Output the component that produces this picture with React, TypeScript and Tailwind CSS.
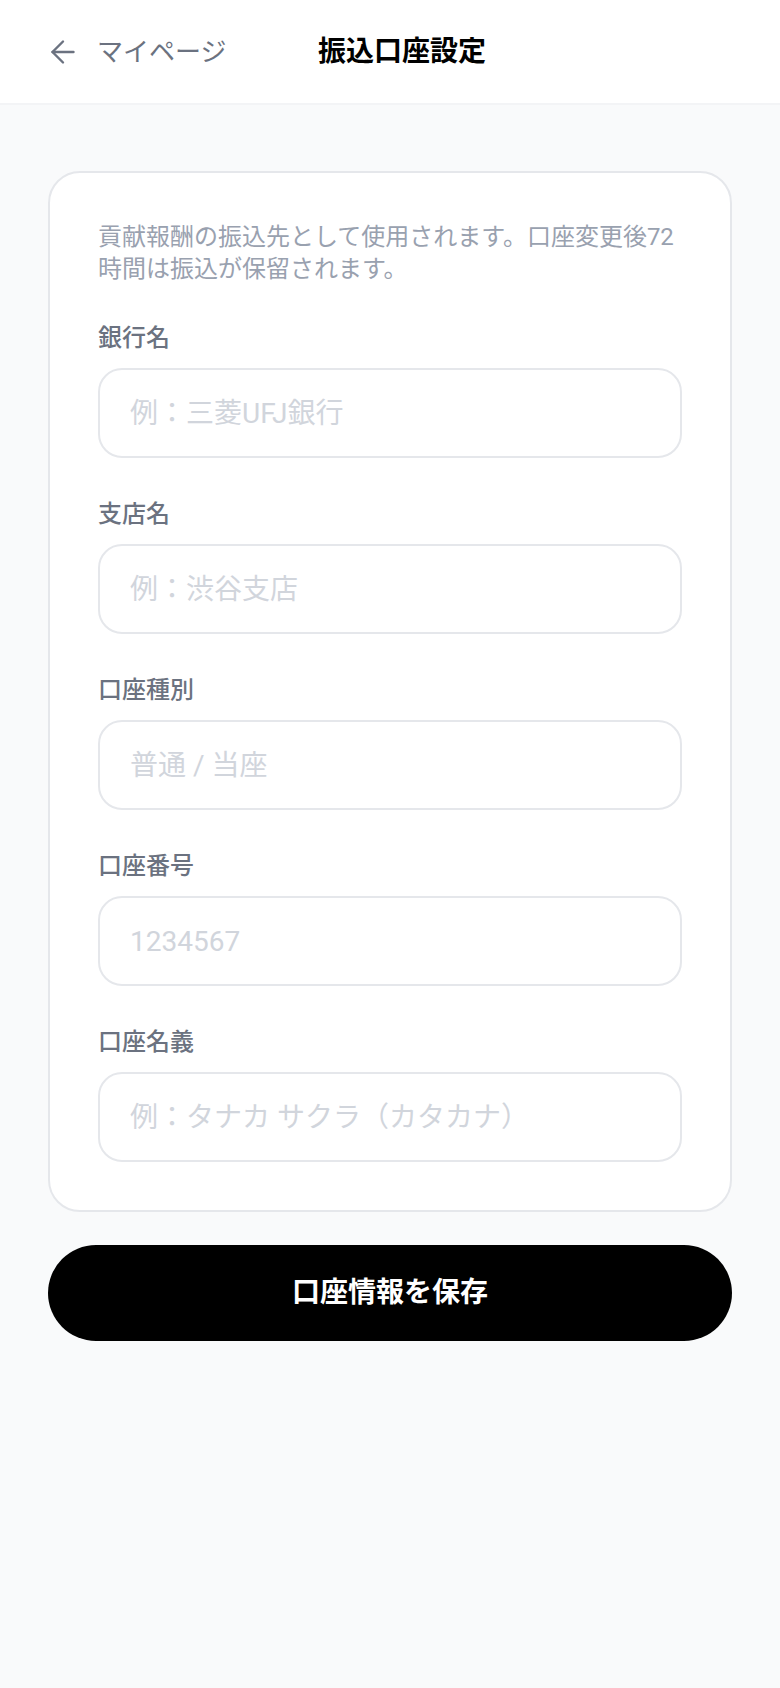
import { ArrowLeft } from 'lucide-react';

const fields = [
  { label: '銀行名', placeholder: '例：三菱UFJ銀行' },
  { label: '支店名', placeholder: '例：渋谷支店' },
  { label: '口座種別', placeholder: '普通 / 当座' },
  { label: '口座番号', placeholder: '1234567' },
  { label: '口座名義', placeholder: '例：タナカ サクラ（カタカナ）' },
];

function Field({ label, placeholder }: { label: string; placeholder: string }) {
  return (
    <div className="flex flex-col">
      <label className="mb-3 text-[24px] leading-9 font-medium text-[#6b7280]">{label}</label>
      <input
        type="text"
        placeholder={placeholder}
        className="h-[90px] w-full rounded-[24px] border-2 border-gray-200 bg-white px-[30px] text-[28px] text-gray-900 outline-none placeholder:text-gray-300"
      />
    </div>
  );
}

export default function App() {
  return (
    <div className="min-h-[1688px] bg-gray-50 font-['Roboto','Noto_Sans_CJK_JP',sans-serif]">
      {/* header */}
      <header className="flex h-[105px] items-center border-b-2 border-gray-100 bg-white pl-[45px]">
        <button className="flex w-[273px] items-center gap-[16px] text-[#6b7280]">
          <ArrowLeft size={36} strokeWidth={1.6} />
          <span className="text-[26px] leading-none">マイページ</span>
        </button>
        <h1 className="text-[28px] leading-none font-bold text-black">振込口座設定</h1>
      </header>

      <main className="px-12 pt-[66px]">
        <div className="rounded-[32px] border-2 border-gray-200 bg-white p-12">
          <p className="mb-[35px] text-[24px] leading-[32px] text-gray-400">
            貢献報酬の振込先として使用されます。口座変更後72時間は振込が保留されます。
          </p>
          <div className="flex flex-col gap-[38px]">
            {fields.map(f => (
              <Field key={f.label} label={f.label} placeholder={f.placeholder} />
            ))}
          </div>
        </div>

        <button className="mt-[33px] flex h-[96px] w-full items-center justify-center rounded-full bg-black text-[28px] font-bold text-white">
          口座情報を保存
        </button>
      </main>
    </div>
  );
}
